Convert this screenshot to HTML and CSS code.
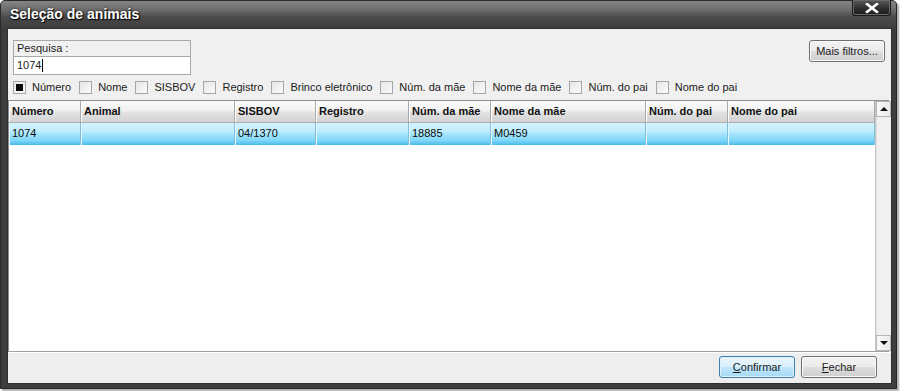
FILE: index.html
```html
<!DOCTYPE html>
<html lang="pt">
<head>
<meta charset="utf-8">
<title>Seleção de animais</title>
<link rel="stylesheet" href="styles.css">
</head>
<body>
<div class="window">
  <div class="titlebar">
    <span class="title">Seleção de animais</span>
    <div class="close"><svg width="14" height="10" viewBox="0 0 14 10"><path d="M2 1 L12 9 M12 1 L2 9" stroke="#fff" stroke-width="2.6" stroke-linecap="square"/></svg></div>
  </div>
  <div class="client">
    <div class="top">
      <div class="search">
        <div class="search-label">Pesquisa :</div>
        <div class="search-input">1074<span class="caret"></span></div>
      </div>
      <button class="btn more">Mais filtros...</button>
    </div>
    <div class="filters">
      <label class="cb"><span class="box checked"></span>Número</label>
      <label class="cb"><span class="box"></span>Nome</label>
      <label class="cb"><span class="box"></span>SISBOV</label>
      <label class="cb"><span class="box"></span>Registro</label>
      <label class="cb"><span class="box"></span>Brinco eletrônico</label>
      <label class="cb"><span class="box"></span>Núm. da mãe</label>
      <label class="cb"><span class="box"></span>Nome da mãe</label>
      <label class="cb"><span class="box"></span>Núm. do pai</label>
      <label class="cb"><span class="box"></span>Nome do pai</label>
    </div>
    <div class="grid">
      <div class="grid-main">
        <div class="row head">
          <div class="cell">Número</div>
          <div class="cell">Animal</div>
          <div class="cell">SISBOV</div>
          <div class="cell">Registro</div>
          <div class="cell">Núm. da mãe</div>
          <div class="cell">Nome da mãe</div>
          <div class="cell">Núm. do pai</div>
          <div class="cell">Nome do pai</div>
        </div>
        <div class="row sel">
          <div class="cell">1074</div>
          <div class="cell"></div>
          <div class="cell">04/1370</div>
          <div class="cell"></div>
          <div class="cell">18885</div>
          <div class="cell">M0459</div>
          <div class="cell"></div>
          <div class="cell"></div>
        </div>
      </div>
      <div class="scrollbar">
        <div class="sb-btn"><span class="tri up"></span></div>
        <div class="sb-track"></div>
        <div class="sb-btn"><span class="tri down"></span></div>
      </div>
    </div>
    <div class="footer">
      <button class="btn primary"><u>C</u>onfirmar</button>
      <button class="btn"><u>F</u>echar</button>
    </div>
  </div>
</div>
</body>
</html>
```
FILE: styles.css
```css
* { box-sizing: border-box; }
html, body { margin: 0; padding: 0; }
body {
  width: 900px;
  height: 391px;
  background: #ffffff;
  font-family: "Liberation Sans", Arial, sans-serif;
  font-size: 11px;
  color: #1b1b1b;
  overflow: hidden;
}
.window {
  width: 897px;
  height: 389px;
  background: #3d3d3d;
  border: 1px solid #2a2a2a;
  border-radius: 5px 5px 0 0;
  display: flex;
  flex-direction: column;
  box-shadow: 2px 2px 2px rgba(0,0,0,0.35);
}
.titlebar {
  height: 27px;
  flex: none;
  display: flex;
  align-items: flex-start;
  justify-content: space-between;
  background: linear-gradient(#858585 0%, #6a6a6a 35%, #4a4a4a 60%, #3e3e3e 100%);
  border-radius: 4px 4px 0 0;
  padding: 0 5px 0 9px;
}
.title {
  color: #ffffff;
  font-weight: bold;
  font-size: 14px;
  line-height: 26px;
  text-shadow: 1px 1px 1px #000, 0 0 3px rgba(0,0,0,0.7);
}
.close {
  width: 39px;
  height: 16px;
  margin-top: -1px;
  background: linear-gradient(#5a5a5a, #2b2b2b 60%, #1f1f1f);
  border: 1px solid #1a1a1a;
  border-top: none;
  border-radius: 0 0 3px 3px;
  box-shadow: inset 0 0 0 1px #6a6a6a;
  display: flex;
  align-items: center;
  justify-content: center;
}
.client {
  flex: 1;
  margin: 0 4px 4px 6px;
  background: #f0f0f0;
  border: 1px solid #2f2f2f;
  display: flex;
  flex-direction: column;
}
.top {
  display: flex;
  justify-content: space-between;
  align-items: flex-start;
  padding: 11px 6px 0 5px;
}
.search {
  width: 178px;
  border: 1px solid #a8a8a8;
  background: #f0f0f0;
}
.search-label {
  height: 16px;
  line-height: 15px;
  padding-left: 3px;
  border-bottom: 1px solid #a8a8a8;
}
.search-input {
  height: 17px;
  line-height: 17px;
  background: #ffffff;
  padding-left: 3px;
  display: flex;
  align-items: center;
}
.caret {
  display: inline-block;
  width: 1px;
  height: 13px;
  background: #000;
  margin-left: 1px;
}
.btn {
  font-family: "Liberation Sans", Arial, sans-serif;
  font-size: 11px;
  color: #1b1b1b;
  height: 22px;
  width: 76px;
  padding: 0;
  border: 1px solid #707070;
  border-radius: 3px;
  background: linear-gradient(#f3f3f3 0%, #ebebeb 48%, #dddddd 52%, #cfcfcf 100%);
  box-shadow: inset 0 0 0 1px #fcfcfc;
}
.btn u { text-decoration: underline; }
.btn.more { margin-top: 0; }
.btn.primary {
  border-color: #3c7fb1;
  background: linear-gradient(#eaf6fd 0%, #d9f0fc 48%, #bee6fd 52%, #a7d9f5 100%);
  box-shadow: inset 0 0 0 1px #dff2fc;
}
.filters {
  display: flex;
  align-items: center;
  gap: 8px;
  padding: 4px 0 0 5px;
  height: 20px;
}
.cb {
  display: flex;
  align-items: center;
  gap: 6px;
  height: 16px;
  color: #1b1b1b;
}
.box {
  width: 13px;
  height: 13px;
  border: 1px solid #a6a6a6;
  background: linear-gradient(135deg, #e6e6e6, #fbfbfb);
  display: flex;
  align-items: center;
  justify-content: center;
}
.box.checked::after {
  content: "";
  width: 7px;
  height: 7px;
  background: #0a0a0a;
}
.grid {
  margin: 5px 2px 0 0;
  height: 252px;
  border: 1px solid #8e8e8e;
  border-bottom: 1px solid #a0a0a0;
  background: #ffffff;
  display: flex;
}
.grid-main { flex: 1; }
.row {
  display: grid;
  grid-template-columns: 72px 154px 81px 93px 82px 155px 82px 147px;
}
.head .cell {
  height: 22px;
  line-height: 20px;
  font-weight: bold;
  color: #111;
  padding-left: 3px;
  background: linear-gradient(#fbfbfb 0%, #f1f1f1 45%, #e2e2e2 55%, #d2d2d2 100%);
  border-right: 1px solid #a9a9a9;
  border-bottom: 1px solid #b0b0b0;
  box-shadow: inset 1px 0 0 #ffffff;
}
.sel .cell {
  height: 22px;
  line-height: 21px;
  padding-left: 3px;
  color: #0b0b0b;
  background: linear-gradient(#d6f3fe 0%, #c2edfd 35%, #9ee2fb 55%, #7ed6f8 80%, #47b9ea 100%);
  border-right: 1px solid #80bfdc;
  box-shadow: inset 1px 0 0 #e4f7ff;
}
.scrollbar {
  width: 16px;
  flex: none;
  border-left: 1px solid #c8c8c8;
  background: #f2f2f2;
  display: flex;
  flex-direction: column;
}
.sb-btn {
  height: 16px;
  border: 1px solid #b6b6b6;
  background: linear-gradient(90deg, #f9f9f9, #eaeaea);
  display: flex;
  align-items: center;
  justify-content: center;
}
.sb-track {
  flex: 1;
  background: #f0f0f0;
  border-left: 1px solid #e0e0e0;
}
.tri {
  width: 0;
  height: 0;
  border-left: 4px solid transparent;
  border-right: 4px solid transparent;
}
.tri.up { border-bottom: 4px solid #111; }
.tri.down { border-top: 4px solid #111; }
.footer {
  flex: 1;
  display: flex;
  justify-content: flex-end;
  align-items: flex-start;
  gap: 6px;
  padding: 3px 14px 0 0;
  border-top: 1px solid #ffffff;
  background: #eeeeee;
}
```
